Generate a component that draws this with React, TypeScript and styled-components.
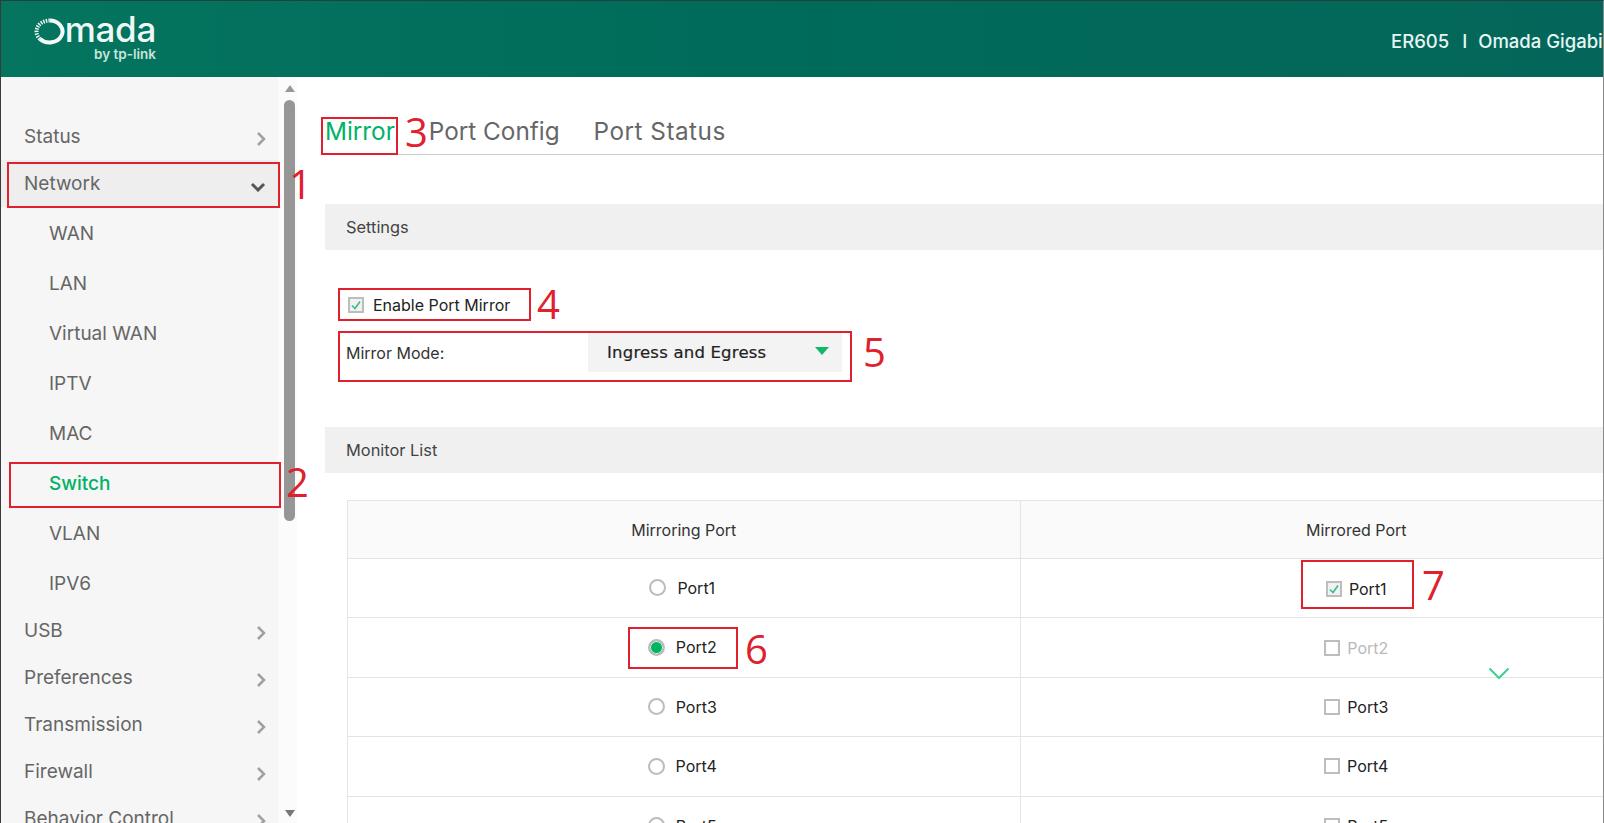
import React from 'react';
import styled, { createGlobalStyle } from 'styled-components';

const GlobalStyle = createGlobalStyle`
  html, body {
    margin: 0;
    padding: 0;
    height: 100%;
    overflow: hidden;
    background: #fff;
  }
  * {
    box-sizing: border-box;
  }
`;

const Page = styled.div`
  position: relative;
  width: 1604px;
  height: 823px;
  overflow: hidden;
  display: flex;
  flex-direction: column;
  font-family: Inter, 'Liberation Sans', sans-serif;
  border-left: 1px solid #3a3a3a;
  border-right: 1px solid #8a8a8a;
  border-top: 1px solid #24403a;
`;

const Header = styled.header`
  height: 76px;
  flex-shrink: 0;
  background: linear-gradient(90deg, #05755f 0%, #006b5a 45%, #04665a 100%);
  display: flex;
  align-items: flex-start;
  justify-content: space-between;
  padding-left: 32px;
`;

const Logo = styled.div`
  margin-top: 10px;
  display: flex;
  flex-direction: column;
  align-items: flex-end;
  width: 123px;
  color: #eef8f5;
`;

const LogoWord = styled.div`
  display: flex;
  align-items: flex-end;
  height: 36px;
  font-size: 35px;
  line-height: 36px;
  font-weight: 500;
  letter-spacing: -0.3px;
`;

const LogoRing = styled.svg`
  width: 31px;
  height: 27px;
  margin-bottom: 2px;
`;

const LogoSub = styled.div`
  font-size: 13.5px;
  line-height: 14px;
  font-weight: 600;
  color: #c9e4dd;
`;

const DeviceName = styled.div`
  width: 212px;
  margin-top: 29px;
  overflow: hidden;
  white-space: nowrap;
  font-size: 18.5px;
  line-height: 22px;
  font-weight: 500;
  color: #e6f6f3;
`;

const Sep = styled.span`
  margin: 0 11px 0 13px;
`;

const Body = styled.div`
  flex: 1;
  display: flex;
  min-height: 0;
`;

const Sidebar = styled.nav`
  width: 277px;
  flex-shrink: 0;
  background: #f6f6f6;
  padding-top: 36px;
  overflow: hidden;
`;

const MenuRow = styled.div<{ $open?: boolean }>`
  height: 47px;
  display: flex;
  align-items: center;
  justify-content: space-between;
  padding: 0 12px 0 23px;
  font-size: 19px;
  color: #666;
  background: ${p => (p.$open ? '#eeeeee' : 'transparent')};
`;

const SubList = styled.div`
  margin: 1px 0 -1px;
`;

const SubRow = styled.div<{ $active?: boolean }>`
  height: 50px;
  display: flex;
  align-items: center;
  padding-left: 48px;
  font-size: 19px;
  color: ${p => (p.$active ? '#00b267' : '#666')};
  font-weight: ${p => (p.$active ? 500 : 400)};
`;

const ScrollStrip = styled.div`
  width: 19px;
  flex-shrink: 0;
  background: #fbfbfb;
  display: flex;
  flex-direction: column;
  align-items: center;
  padding: 8px 0 6px 4px;
`;

const ScrollArrow = styled.div<{ $down?: boolean }>`
  width: 0;
  height: 0;
  border-left: 5px solid transparent;
  border-right: 5px solid transparent;
  ${p =>
    p.$down
      ? 'border-top: 7px solid #777; margin-top: auto;'
      : 'border-bottom: 7px solid #999;'}
`;

const ScrollThumb = styled.div`
  width: 11px;
  height: 421px;
  margin-top: 8px;
  border-radius: 6px;
  background: #969696;
`;

const Main = styled.main`
  flex: 1;
  min-width: 0;
  overflow: hidden;
  padding-left: 28px;
`;

const Tabs = styled.div`
  height: 78px;
  display: flex;
  align-items: flex-end;
  gap: 34px;
  border-bottom: 1px solid #cfcfcf;
  padding: 0 0 7px 0;
`;

const Tab = styled.div<{ $active?: boolean; $spacing?: number }>`
  font-size: 24.3px;
  line-height: 32px;
  letter-spacing: ${p => p.$spacing ?? 0}px;
  color: ${p => (p.$active ? '#00b267' : '#666')};
`;

const SectionBar = styled.div<{ $top: number }>`
  height: 46px;
  margin-top: ${p => p.$top}px;
  padding-left: 21px;
  display: flex;
  align-items: center;
  background: #f0f0f0;
  font-size: 16.4px;
  color: #444;
`;

const CheckRow = styled.label`
  height: 32px;
  margin-top: 39px;
  padding-left: 23px;
  display: flex;
  align-items: center;
  gap: 9px;
  font-size: 16px;
  color: #222;
`;

const CheckBox = styled.span<{ $checked?: boolean }>`
  width: 16px;
  height: 16px;
  flex-shrink: 0;
  display: inline-flex;
  align-items: center;
  justify-content: center;
  border: 2px solid #bdbdbd;
  background: ${p => (p.$checked ? '#f1f1f1' : '#fff')};
`;

const ModeRow = styled.div`
  margin-top: 12px;
  padding-left: 21px;
  display: flex;
  align-items: center;
  font-size: 16px;
  color: #333;
`;

const ModeLabel = styled.div`
  width: 242px;
`;

const ModeSelect = styled.div`
  width: 254px;
  height: 39px;
  padding: 0 13px 0 19px;
  display: flex;
  align-items: center;
  justify-content: space-between;
  background: #f3f3f3;
  font-family: 'DejaVu Sans', sans-serif;
  font-size: 16.5px;
  letter-spacing: 0.2px;
  -webkit-text-stroke: 0.2px #222;
  color: #222;
`;

const SelectArrow = styled.span`
  width: 0;
  height: 0;
  border-left: 7px solid transparent;
  border-right: 7px solid transparent;
  border-top: 8px solid #12b76a;
  margin-bottom: 3px;
`;

const PortTable = styled.table`
  width: 1346px;
  margin: 27px 0 0 22px;
  border-collapse: collapse;
  table-layout: fixed;
  font-size: 16px;
`;

const HeadCell = styled.th`
  height: 58px;
  font-weight: 400;
  color: #333;
  background: #fafafa;
  border: 1px solid #e4e4e4;
`;

const Cell = styled.td`
  height: 59.4px;
  text-align: center;
  border: 1px solid #e4e4e4;
`;

const PortOption = styled.span<{ $disabled?: boolean; $gap: number; $pad?: number }>`
  display: inline-flex;
  align-items: center;
  gap: ${p => p.$gap}px;
  padding-right: ${p => p.$pad ?? 0}px;
  padding-top: 2px;
  color: ${p => (p.$disabled ? '#b9b9b9' : '#222')};
`;

const Radio = styled.span<{ $checked?: boolean }>`
  width: 17px;
  height: 17px;
  border-radius: 50%;
  border: 2px solid #bcbcbc;
  background: ${p => (p.$checked ? '#00b35f' : '#fff')};
  box-shadow: ${p => (p.$checked ? 'inset 0 0 0 1px #e8f5ee' : 'none')};
`;

const RedBox = styled.div<{ $x: number; $y: number; $w: number; $h: number }>`
  position: absolute;
  left: ${p => p.$x}px;
  top: ${p => p.$y}px;
  width: ${p => p.$w}px;
  height: ${p => p.$h}px;
  border: 2px solid #e0202c;
  pointer-events: none;
`;

const RedNumber = styled.div<{ $x: number; $y: number }>`
  position: absolute;
  left: ${p => p.$x}px;
  top: ${p => p.$y}px;
  font-family: 'Open Sans', sans-serif;
  font-size: 40px;
  font-weight: 400;
  line-height: 40px;
  color: #e0202c;
`;

const FloatChevron = styled.svg`
  position: absolute;
  left: 1487px;
  top: 666px;
  width: 22px;
  height: 13px;
`;

const ChevronIcon = styled.svg<{ $drop: number }>`
  margin-top: ${p => p.$drop}px;
`;

const ChevronRight = () => (
  <ChevronIcon $drop={5} width="10" height="16" viewBox="0 0 10 16">
    <path d="M2 2l6 6-6 6" fill="none" stroke="#a0a0a0" strokeWidth="2.5" />
  </ChevronIcon>
);

const ChevronDown = () => (
  <ChevronIcon $drop={6} width="16" height="10" viewBox="0 0 16 10">
    <path d="M2 2l6 6 6-6" fill="none" stroke="#555" strokeWidth="3" />
  </ChevronIcon>
);

const Tick = ({ size }: { size: number }) => (
  <svg width={size} height={size} viewBox="0 0 12 12">
    <path d="M2 6.5l3 3 5-7" fill="none" stroke="#35c08a" strokeWidth="1.6" />
  </svg>
);

const subItems = ['WAN', 'LAN', 'Virtual WAN', 'IPTV', 'MAC', 'Switch', 'VLAN', 'IPV6'];
const lowerItems = ['USB', 'Preferences', 'Transmission', 'Firewall', 'Behavior Control'];

const ports = ['Port1', 'Port2', 'Port3', 'Port4', 'Port5'];

const boxes = [
  { x: 6, y: 161, w: 273, h: 46 },
  { x: 8, y: 461, w: 272, h: 46 },
  { x: 320, y: 116, w: 77, h: 38 },
  { x: 337, y: 287, w: 193, h: 33 },
  { x: 337, y: 330, w: 514, h: 51 },
  { x: 627, y: 626, w: 110, h: 42 },
  { x: 1300, y: 559, w: 113, h: 49 },
];

const numbers = [
  { n: 1, x: 288, y: 163 },
  { n: 2, x: 285, y: 461 },
  { n: 3, x: 404, y: 111 },
  { n: 4, x: 536, y: 283 },
  { n: 5, x: 862, y: 331 },
  { n: 6, x: 744, y: 628 },
  { n: 7, x: 1421, y: 564 },
];

const App = () => {
  return (
    <Page>
      <GlobalStyle />
      <Header>
        <Logo>
          <LogoWord>
            <LogoRing viewBox="0 0 31 27">
              <path
                d="M15.5 2.5a13 11 0 1 1 -9.5 18.5"
                fill="none"
                stroke="#f2faf7"
                strokeWidth="4"
              />
              <path
                d="M6 21a13 11 0 0 1 9.5 -18.5"
                fill="none"
                stroke="#f2faf7"
                strokeWidth="4"
                strokeDasharray="1.4 1.2"
              />
            </LogoRing>
            mada
          </LogoWord>
          <LogoSub>by tp-link</LogoSub>
        </Logo>
        <DeviceName>
          ER605<Sep>I</Sep>Omada Gigabit VPN Router
        </DeviceName>
      </Header>
      <Body>
        <Sidebar>
          <MenuRow>
            Status
            <ChevronRight />
          </MenuRow>
          <MenuRow $open>
            Network
            <ChevronDown />
          </MenuRow>
          <SubList>
            {subItems.map(item => (
              <SubRow key={item} $active={item === 'Switch'}>
                {item}
              </SubRow>
            ))}
          </SubList>
          {lowerItems.map(item => (
            <MenuRow key={item}>
              {item}
              <ChevronRight />
            </MenuRow>
          ))}
        </Sidebar>
        <ScrollStrip>
          <ScrollArrow />
          <ScrollThumb />
          <ScrollArrow $down />
        </ScrollStrip>
        <Main>
          <Tabs>
            <Tab $active>Mirror</Tab>
            <Tab>Port Config</Tab>
            <Tab $spacing={0.5}>Port Status</Tab>
          </Tabs>
          <SectionBar $top={49}>Settings</SectionBar>
          <CheckRow>
            <CheckBox $checked>
              <Tick size={12} />
            </CheckBox>
            Enable Port Mirror
          </CheckRow>
          <ModeRow>
            <ModeLabel>Mirror Mode:</ModeLabel>
            <ModeSelect>
              Ingress and Egress
              <SelectArrow />
            </ModeSelect>
          </ModeRow>
          <SectionBar $top={55}>Monitor List</SectionBar>
          <PortTable>
            <thead>
              <tr>
                <HeadCell>Mirroring Port</HeadCell>
                <HeadCell>Mirrored Port</HeadCell>
              </tr>
            </thead>
            <tbody>
              {ports.map((port, i) => (
                <tr key={port}>
                  <Cell>
                    <PortOption $gap={11} $pad={3}>
                      <Radio $checked={i === 1} />
                      {port}
                    </PortOption>
                  </Cell>
                  <Cell>
                    <PortOption $gap={7} $disabled={i === 1}>
                      <CheckBox $checked={i === 0}>
                        {i === 0 && <Tick size={12} />}
                      </CheckBox>
                      {port}
                    </PortOption>
                  </Cell>
                </tr>
              ))}
            </tbody>
          </PortTable>
        </Main>
      </Body>
      {boxes.map(b => (
        <RedBox key={b.x} $x={b.x} $y={b.y} $w={b.w} $h={b.h} />
      ))}
      {numbers.map(item => (
        <RedNumber key={item.n} $x={item.x} $y={item.y}>
          {item.n}
        </RedNumber>
      ))}
      <FloatChevron viewBox="0 0 22 13">
        <path d="M1.5 1.5L11 11l9.5-9.5" fill="none" stroke="#3fcf8e" strokeWidth="2" />
      </FloatChevron>
    </Page>
  );
};

export default App;
